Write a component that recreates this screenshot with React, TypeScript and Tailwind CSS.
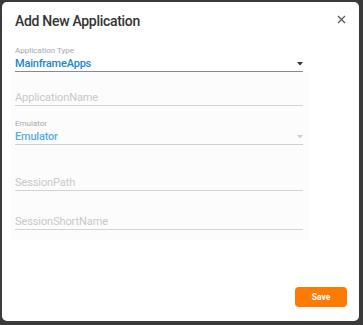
import React from "react";

function Caret({ color }: { color: string }) {
  return (
    <svg width="6" height="4" viewBox="0 0 6 4" className="shrink-0">
      <path d="M0 0 L6 0 L3 3.5 Z" fill={color} />
    </svg>
  );
}

function SelectField({ label, value, valueColor, lineColor, caretColor }: { label: string; value: string; valueColor: string; lineColor: string; caretColor: string }) {
  return (
    <div className="flex flex-col">
      <div className="text-[8px] leading-[10px] text-[#a8a8a8]">{label}</div>
      <div className={`flex items-center justify-between h-[16px] border-b ${lineColor}`}>
        <span className={`text-[11px] leading-[14px] tracking-[-0.2px] font-medium ${valueColor}`}>{value}</span>
        <Caret color={caretColor} />
      </div>
    </div>
  );
}

function TextField({ placeholder }: { placeholder: string }) {
  return (
    <div className="h-[15px] border-b border-[#d4d4d4] flex items-end">
      <span className="text-[11px] leading-[14px] tracking-[-0.1px] text-[#c8c8c8]">{placeholder}</span>
    </div>
  );
}

export default function App() {
  return (
    <div
      className="w-[363px] h-[325px] bg-[#3a3a3a] pt-[2px] pl-[2px] pr-[4px] pb-[4px]"
      style={{ fontFamily: "Roboto, 'Noto Sans', sans-serif" }}
    >
      <div className="h-full bg-white rounded-[5px] flex flex-col">
        <div className="flex items-center justify-between pl-[13px] pr-[13px] pt-[9px] h-[29px]">
          <h1 className="text-[14px] leading-[20px] tracking-[-0.3px] font-medium text-[#333]">Add New Application</h1>
          <svg width="9" height="9" viewBox="0 0 9 9" className="mb-[3px]">
            <path d="M1 1 L8 8 M8 1 L1 8" stroke="#555" strokeWidth="1.2" />
          </svg>
        </div>
        <div className="mt-[15px] ml-[13px] w-[288px] flex flex-col">
          <SelectField
            label="Application Type"
            value="MainframeApps"
            valueColor="text-[#1a86d8]"
            lineColor="border-[#8a8a8a]"
            caretColor="#333"
          />
        </div>
        <div className="ml-[9px] w-[298px] bg-[#fcfcfc] pl-[4px] pr-[6px] pt-[19px] pb-[10px] flex flex-col">
          <TextField placeholder="ApplicationName" />
          <div className="mt-[13px]">
            <SelectField
              label="Emulator"
              value="Emulator"
              valueColor="text-[#5aace6]"
              lineColor="border-[#cfcfcf]"
              caretColor="#cfcfcf"
            />
          </div>
          <div className="mt-[31px]">
            <TextField placeholder="SessionPath" />
          </div>
          <div className="mt-[24px]">
            <TextField placeholder="SessionShortName" />
          </div>
        </div>
        <div className="flex-1" />
        <div className="flex justify-end pr-[12px] pb-[14px]">
          <button className="w-[52px] h-[20px] rounded-[4px] bg-[#ff7a00] text-white text-[8.5px] font-bold">
            Save
          </button>
        </div>
      </div>
    </div>
  );
}
